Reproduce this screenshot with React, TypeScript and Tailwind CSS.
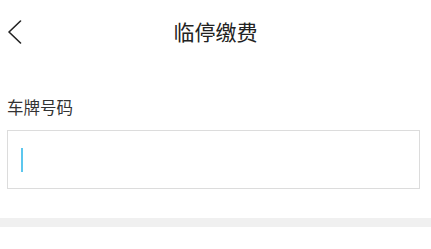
import React from 'react';

const App: React.FC = () => {
  return (
    <div className="min-h-screen bg-white font-['Noto_Sans_CJK_SC','Noto_Sans',sans-serif]">
      <div className="grid h-[63px] grid-cols-[60px_1fr_60px] items-center">
        <button className="flex h-full items-center pl-[7px]">
          <svg width="15" height="24" viewBox="0 0 15 24" fill="none">
            <path d="M13.5 1 L2 12 L13.5 23" stroke="#222" strokeWidth="1.6" strokeLinecap="round" strokeLinejoin="round" />
          </svg>
        </button>
        <h1 className="text-center text-[21px] leading-none text-[#222]">临停缴费</h1>
        <div />
      </div>

      <div className="pl-[7px] pr-[11px] pt-[36px]">
        <label className="block text-[16.5px] leading-[17px] text-[#333]">车牌号码</label>
        <div className="mt-[14px] flex h-[59px] items-center border border-[#dcdcdc] pl-[13px]">
          <div className="h-[24px] w-[2px] bg-[#5cc7ee]" />
        </div>
      </div>

      <div className="mt-[29px] h-[9px] bg-[#f0f0f0]" />
    </div>
  );
};

export default App;
